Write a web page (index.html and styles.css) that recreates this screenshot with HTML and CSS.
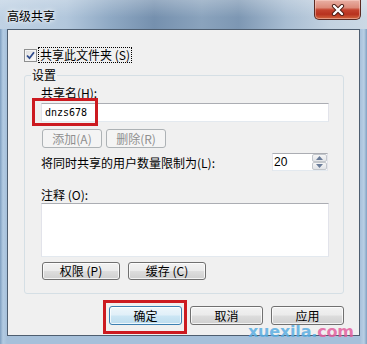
FILE: index.html
```html
<!DOCTYPE html>
<html lang="zh-CN">
<head>
<meta charset="utf-8">
<title>高级共享</title>
<link rel="stylesheet" href="styles.css">
</head>
<body>
<div class="window">
  <div class="titlebar">
    <span class="title">高级共享</span>
    <div class="close">
      <svg width="16" height="12" viewBox="0 0 16 12">
        <path d="M4 2 L12 10 M12 2 L4 10" stroke="#4a1c14" stroke-width="4.2" stroke-linecap="round"/>
        <path d="M4 2 L12 10 M12 2 L4 10" stroke="#ffffff" stroke-width="2.4" stroke-linecap="round"/>
      </svg>
    </div>
  </div>
  <div class="client">
    <div class="share-row">
      <span class="checkbox">
        <svg width="11" height="11" viewBox="0 0 11 11"><path d="M2 5.5 L4.5 8.2 L9 2.3" fill="none" stroke="#2f4b8c" stroke-width="1.8"/></svg>
      </span>
      <span class="focus-label">共享此文件夹 (S)</span>
    </div>
    <fieldset class="group">
      <legend>设置</legend>
      <div class="label">共享名(H):</div>
      <div class="name-field">
        <div class="textbox name-input">dnzs678</div>
        <div class="mark mark-name"></div>
      </div>
      <div class="btn-row small">
        <div class="btn disabled">添加(A)</div>
        <div class="btn disabled">删除(R)</div>
      </div>
      <div class="limit-row">
        <span>将同时共享的用户数量限制为(L):</span>
        <div class="spinner">
          <span class="spin-value">20</span>
          <div class="spin-btns">
            <span class="spin up"><svg width="7" height="4" viewBox="0 0 7 4"><path d="M0 4 L3.5 0 L7 4 Z" fill="#6a7c99"/></svg></span>
            <span class="spin down"><svg width="7" height="4" viewBox="0 0 7 4"><path d="M0 0 L3.5 4 L7 0 Z" fill="#6a7c99"/></svg></span>
          </div>
        </div>
      </div>
      <div class="label comment-label">注释 (O):</div>
      <div class="textbox comment"></div>
      <div class="btn-row wide">
        <div class="btn">权限 (P)</div>
        <div class="btn">缓存 (C)</div>
      </div>
    </fieldset>
    <div class="footer">
      <div class="ok-wrap">
        <div class="btn default">确定</div>
        <div class="mark mark-ok"></div>
      </div>
      <div class="btn">取消</div>
      <div class="btn">应用</div>
    </div>
  </div>
  <div class="watermark"><span class="wm-blue">xuexila.</span><span class="wm-pink">com</span></div>
</div>
</body>
</html>
```
FILE: styles.css
```css
html, body {
  margin: 0;
  padding: 0;
}
body {
  width: 367px;
  height: 344px;
  overflow: hidden;
  font-family: "Noto Sans CJK SC", "Liberation Sans", sans-serif;
  font-size: 12px;
  line-height: 15px;
  color: #000;
}
.window {
  position: relative;
  width: 367px;
  height: 344px;
  display: flex;
  flex-direction: column;
  background:
    linear-gradient(90deg, #7f9fc0 0px, #b3cbe2 3px, #a6c0da 7px, #a6c0da 360px, #b8cfe4 364px, #7f9fc0 367px);
}
.titlebar {
  height: 29px;
  flex: none;
  display: flex;
  align-items: flex-start;
  background:
    linear-gradient(180deg, rgba(255,255,255,0.25), rgba(255,255,255,0) 60%),
    linear-gradient(90deg, #c0d2e4 0%, #b2c7dc 18%, #8fa9c4 30%, #7590ae 42%, #8aa3bd 55%, #7d97b3 65%, #a8bdd2 78%, #c3d2e1 90%, #cbd8e4 100%);
}
.title {
  padding: 8px 0 0 7px;
  line-height: 15px;
  text-shadow: 0 0 6px rgba(255,255,255,0.9), 0 0 3px rgba(255,255,255,0.9);
}
.close {
  margin-left: auto;
  margin-right: 6px;
  width: 47px;
  height: 20px;
  box-sizing: border-box;
  border: 1px solid #5b2a22;
  border-top: none;
  border-radius: 0 0 5px 5px;
  background: linear-gradient(180deg, #e9b0a4 0%, #dc8b7a 40%, #c4432e 52%, #b8321e 75%, #d2673f 100%);
  box-shadow: inset 0 0 0 1px rgba(255,220,210,0.45);
  display: flex;
  align-items: center;
  justify-content: center;
}
.client {
  flex: 1;
  margin: 0 7px 8px;
  border: 1px solid #4e5e70;
  background: #f0f0f0;
  padding-top: 17px;
  display: flex;
  flex-direction: column;
}
.share-row {
  display: flex;
  align-items: flex-start;
  gap: 1px;
  margin-left: 16px;
  height: 16px;
}
.checkbox {
  margin-top: 2px;
  width: 13px;
  height: 13px;
  box-sizing: border-box;
  border: 1px solid #8e8f8f;
  background: linear-gradient(135deg, #dcdcdc, #ffffff);
  box-shadow: inset 0 0 0 1px #f4f4f4;
  display: flex;
  align-items: center;
  justify-content: center;
}
.focus-label {
  border: 1px dotted #000;
  padding: 0 1px;
  line-height: 14px;
}
.group {
  margin: 5px 0 0 16px;
  width: 320px;
  box-sizing: border-box;
  border: 1px solid #d5dfe5;
  border-radius: 3px;
  padding: 3px 14px 13px 16px;
  min-width: 0;
}
.group legend {
  padding: 0 1px;
  margin-left: -10px;
  line-height: 14px;
}
.label {
  line-height: 15px;
}
.name-field {
  position: relative;
  margin-top: 3px;
}
.textbox {
  box-sizing: border-box;
  background: #fff;
  border: 1px solid #e2e3ea;
  border-top-color: #abadb3;
  border-bottom-color: #e3e9ef;
}
.name-input {
  height: 19px;
  padding-left: 3px;
  font-family: "DejaVu Sans Mono", monospace;
  font-size: 10px;
  line-height: 17px;
}
.mark {
  position: absolute;
  box-sizing: border-box;
  border: 3px solid #cc1a20;
}
.mark-name {
  left: -9px;
  top: -5px;
  width: 66px;
  height: 28px;
}
.btn-row {
  display: flex;
  margin-left: 1px;
}
.btn-row.small {
  margin-top: 7px;
  gap: 4px;
}
.btn-row.small .btn {
  width: 60px;
  height: 19px;
}
.btn-row.wide {
  margin-top: 5px;
  gap: 8px;
}
.btn-row.wide .btn {
  width: 78px;
  height: 18px;
}
.btn {
  box-sizing: border-box;
  border: 1px solid #707070;
  border-radius: 3px;
  background: linear-gradient(180deg, #f2f2f2 0%, #ebebeb 48%, #dddddd 52%, #cfcfcf 100%);
  box-shadow: inset 0 0 0 1px rgba(255,255,255,0.75);
  display: flex;
  align-items: center;
  justify-content: center;
  line-height: 14px;
}
.btn.disabled {
  border-color: #adb2b5;
  background: #f4f4f4;
  box-shadow: none;
  color: #8f8f8f;
}
.btn.default {
  border-color: #3c7fb1;
  background: linear-gradient(180deg, #eef6fb 0%, #e0eff8 48%, #cce6f4 52%, #bcdcee 100%);
}
.limit-row {
  margin-top: 5px;
  display: flex;
  align-items: center;
  justify-content: space-between;
}
.spinner {
  width: 56px;
  height: 18px;
  margin-right: 1px;
  box-sizing: border-box;
  background: #fff;
  border: 1px solid #e2e3ea;
  border-top-color: #abadb3;
  border-bottom-color: #e3e9ef;
  display: flex;
  align-items: stretch;
}
.spin-value {
  flex: 1;
  padding-left: 1px;
  font-family: "Liberation Sans", sans-serif;
  font-size: 12px;
  line-height: 16px;
}
.spin-btns {
  width: 15px;
  display: flex;
  flex-direction: column;
}
.spin {
  flex: 1;
  box-sizing: border-box;
  border: 1px solid #c3c7cc;
  border-radius: 2px;
  background: linear-gradient(180deg, #f6f6f6, #e2e4e7);
  display: flex;
  align-items: center;
  justify-content: center;
}
.comment-label {
  margin-top: 16px;
}
.comment {
  margin-top: 1px;
  height: 54px;
}
.footer {
  margin-top: 12px;
  padding-right: 15px;
  display: flex;
  justify-content: flex-end;
  gap: 8px;
}
.footer .btn {
  width: 73px;
  height: 19px;
}
.ok-wrap {
  position: relative;
}
.mark-ok {
  left: -6px;
  top: -6px;
  right: -5px;
  bottom: -9px;
}
.watermark {
  position: absolute;
  left: 248px;
  top: 322px;
  font-family: "DejaVu Sans", sans-serif;
  font-weight: bold;
  font-size: 16px;
  line-height: 19px;
  letter-spacing: -0.2px;
  opacity: 0.85;
}
.wm-blue {
  color: #5aaee2;
}
.wm-pink {
  color: #e2609e;
}
```
